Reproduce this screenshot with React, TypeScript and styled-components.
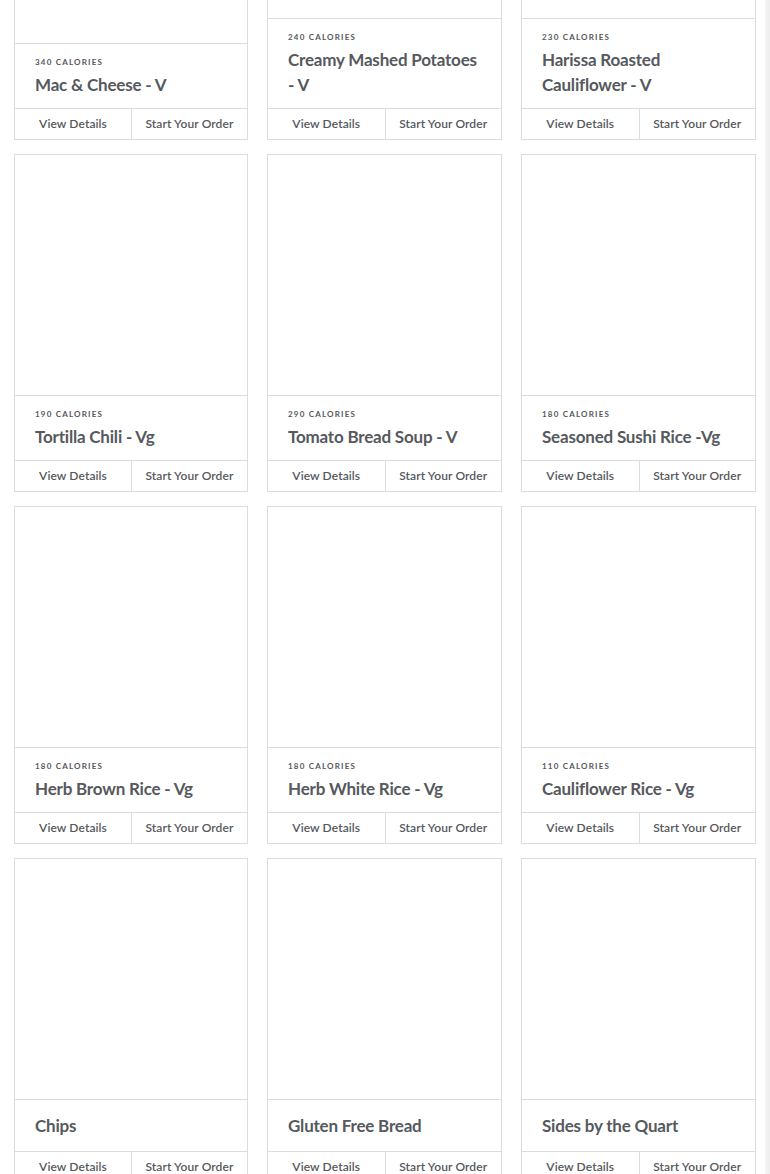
import React from "react";
import styled, { createGlobalStyle } from "styled-components";

const Global = createGlobalStyle`
  html, body { margin: 0; padding: 0; background: #fff; overflow: hidden; }
  body { font-family: Lato, "Open Sans", sans-serif; -webkit-font-smoothing: antialiased; }
`;

const Page = styled.div`
  display: flex;
  width: 770px;
  height: 1174px;
  overflow: hidden;
`;

const Main = styled.div`
  flex: 1;
  overflow: hidden;
`;

const Scrollbar = styled.div`
  width: 5px;
  flex: none;
  background: linear-gradient(to right, #f6f6f6, #eeeeee);
`;

const Grid = styled.div`
  display: grid;
  grid-template-columns: 234px 235px 235px;
  column-gap: 19px;
  row-gap: 14px;
  width: 742px;
  margin: -223px 0 0 14px;
  align-items: stretch;
`;

const Card = styled.div`
  display: flex;
  flex-direction: column;
  border: 1px solid #dcdcdc;
  background: #fff;
`;

const Photo = styled.div`
  flex: 1;
  min-height: 240px;
  border-bottom: 1px solid #dcdcdc;
`;

const Info = styled.div<{ $noCal?: boolean }>`
  padding: ${(p) => (p.$noCal ? "13px 18px 13px 20px" : "12px 18px 11px 20px")};
`;

const Calories = styled.div`
  font-size: 8px;
  line-height: 12px;
  font-weight: 700;
  letter-spacing: 1.2px;
  color: #55585c;
  text-transform: uppercase;
  margin-bottom: 4px;
`;

const Title = styled.div`
  font-size: 17px;
  line-height: 25px;
  font-weight: 700;
  letter-spacing: -0.2px;
  color: #56595e;
`;

const Actions = styled.div`
  display: grid;
  grid-template-columns: 1fr 1fr;
  border-top: 1px solid #dcdcdc;
  height: 30px;
`;

const Action = styled.button<{ $divider?: boolean }>`
  all: unset;
  display: flex;
  align-items: center;
  justify-content: center;
  padding-bottom: 2px;
  font-family: Lato, "Open Sans", sans-serif;
  font-size: 12px;
  font-weight: 600;
  letter-spacing: 0.1px;
  color: #55585c;
  border-left: ${(p) => (p.$divider ? "1px solid #dcdcdc" : "none")};
  cursor: pointer;
`;

type Item = { name: string; cal?: number };

const items: Item[] = [
  { name: "Mac & Cheese - V", cal: 340 },
  { name: "Creamy Mashed Potatoes - V", cal: 240 },
  { name: "Harissa Roasted Cauliflower - V", cal: 230 },
  { name: "Tortilla Chili - Vg", cal: 190 },
  { name: "Tomato Bread Soup - V", cal: 290 },
  { name: "Seasoned Sushi Rice -Vg", cal: 180 },
  { name: "Herb Brown Rice - Vg", cal: 180 },
  { name: "Herb White Rice - Vg", cal: 180 },
  { name: "Cauliflower Rice - Vg", cal: 110 },
  { name: "Chips" },
  { name: "Gluten Free Bread" },
  { name: "Sides by the Quart" },
];

export default function App() {
  return (
    <Page>
      <Global />
      <Main>
        <Grid>
          {items.map((it) => (
            <Card key={it.name}>
              <Photo />
              <Info $noCal={it.cal === undefined}>
                {it.cal !== undefined && <Calories>{it.cal} Calories</Calories>}
                <Title>{it.name}</Title>
              </Info>
              <Actions>
                <Action>View Details</Action>
                <Action $divider>Start Your Order</Action>
              </Actions>
            </Card>
          ))}
        </Grid>
      </Main>
      <Scrollbar />
    </Page>
  );
}
